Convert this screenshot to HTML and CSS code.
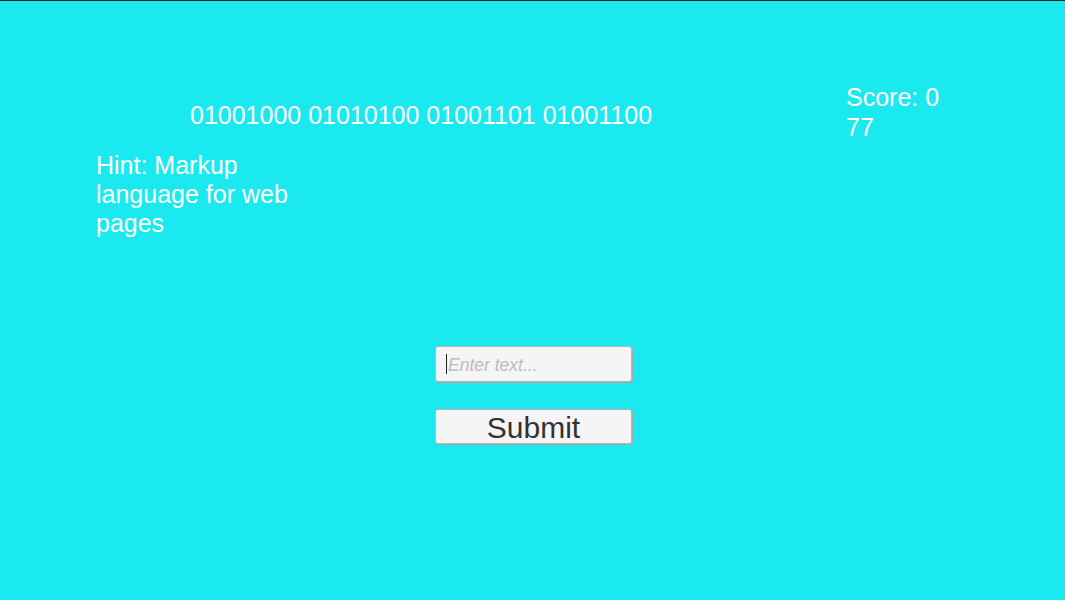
FILE: index.html
```html
<!DOCTYPE html>
<html>
<head>
<meta charset="utf-8">
<link rel="stylesheet" href="styles.css">
</head>
<body>
<div class="screen">
  <div class="top">
    <div class="main-col">
      <div class="binary">01001000 01010100 01001101 01001100</div>
      <div class="hint">Hint: Markup language for web pages</div>
    </div>
    <div class="score">
      <div>Score: 0</div>
      <div class="score-value">77</div>
    </div>
  </div>
  <div class="form">
    <div class="field"><span class="caret"></span><span class="placeholder">Enter text...</span></div>
    <button class="submit">Submit</button>
  </div>
</div>
</body>
</html>
```
FILE: styles.css
```css
html, body {
  margin: 0;
  padding: 0;
}
body {
  background: #1be9f0;
  font-family: "Liberation Sans", Arial, sans-serif;
}
.screen {
  box-sizing: border-box;
  width: 1065px;
  height: 600px;
  border-top: 1px solid #1c1c1c;
  background: #1be9f0;
  overflow: hidden;
}
.top {
  display: flex;
  padding-top: 82px;
  color: #ffffff;
  font-size: 25px;
  line-height: 29px;
}
.main-col {
  margin-left: 96px;
  width: 750px;
}
.binary {
  margin-top: 18px;
  margin-left: 94px;
  white-space: nowrap;
}
.hint {
  margin-top: 21px;
  width: 200px;
}
.score {
  width: 120px;
}
.score-value {
  margin-top: 1px;
}
.form {
  display: flex;
  flex-direction: column;
  gap: 27px;
  margin-top: 108px;
  margin-left: 435px;
  width: 197px;
}
.field {
  box-sizing: border-box;
  height: 36px;
  display: flex;
  align-items: center;
  padding-left: 10px;
  padding-top: 2px;
  background: #f5f5f5;
  border: 1px solid #b5b5b5;
  border-radius: 3px;
  box-shadow: 1px 1px 0 #a8a8a8;
}
.caret {
  width: 1px;
  height: 20px;
  background: #222;
  margin-right: 1px;
  margin-top: -2px;
}
.placeholder {
  font-style: italic;
  font-size: 17.5px;
  color: #bcbcbc;
}
.submit {
  box-sizing: border-box;
  height: 35px;
  width: 197px;
  padding: 2px 0 0 0;
  background: #f5f5f5;
  border: 1px solid #b5b5b5;
  border-radius: 3px;
  box-shadow: 1px 1px 0 #a8a8a8;
  font-family: "Liberation Sans", Arial, sans-serif;
  font-size: 30px;
  line-height: 31px;
  color: #323232;
}
```
